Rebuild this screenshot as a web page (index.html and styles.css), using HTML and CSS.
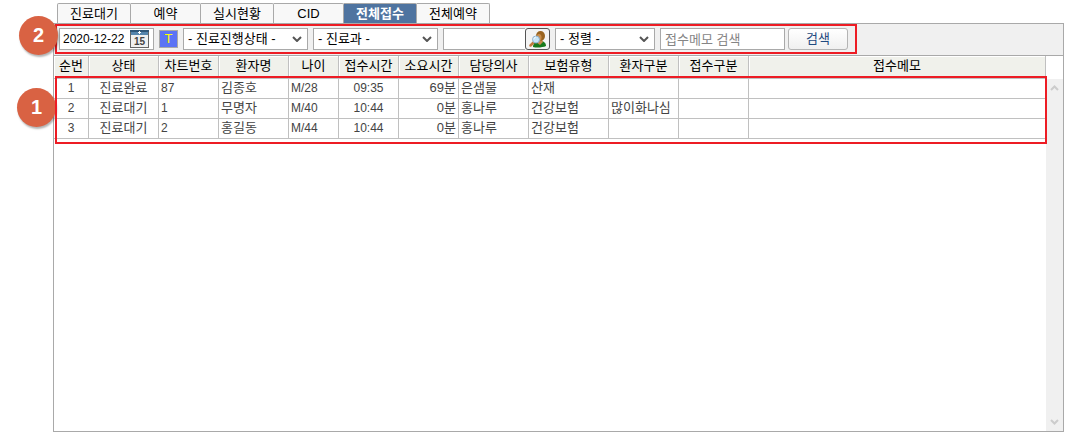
FILE: index.html
```html
<!DOCTYPE html>
<html lang="ko">
<head>
    <meta charset="UTF-8">
    <meta name="viewport" content="width=device-width, initial-scale=1.0">
    <title>전체접수</title>
    <link rel="stylesheet" href="styles.css">
</head>
<body>
    <nav class="tabs">
        <button class="tab">진료대기</button>
        <button class="tab short">예약</button>
        <button class="tab">실시현황</button>
        <button class="tab short">CID</button>
        <button class="tab active">전체접수</button>
        <button class="tab">전체예약</button>
    </nav>

    <main class="panel">
        <span class="badge badge-search">2</span>
        <span class="badge badge-list">1</span>

        <div class="toolbar">
            <form class="filters">
                <div class="field date">
                    <input type="text" value="2020-12-22" aria-label="접수일">
                    <button type="button" class="calendar" aria-label="달력">
                        <svg width="19" height="18" viewBox="0 0 19 18">
                            <rect x="0.5" y="0.5" width="18" height="17" fill="#f0f0f0" stroke="#666"/>
                            <rect x="1" y="1" width="17" height="4" fill="#5585ad"/>
                            <rect x="0" y="0" width="19" height="2" fill="#2f5678"/>
                            <path d="M8 2.5h3M9.5 1v3" stroke="#fff"/>
                            <text x="9.5" y="15" text-anchor="middle" class="day">15</text>
                        </svg>
                    </button>
                </div>
                <button type="button" class="today">T</button>
                <div class="select wide">
                    <select aria-label="진료진행상태"><option>- 진료진행상태 -</option></select>
                    <svg class="arrow" width="10" height="6" viewBox="0 0 10 6"><path d="M1 1l4 4 4-4"/></svg>
                </div>
                <div class="select wide">
                    <select aria-label="진료과"><option>- 진료과 -</option></select>
                    <svg class="arrow" width="10" height="6" viewBox="0 0 10 6"><path d="M1 1l4 4 4-4"/></svg>
                </div>
                <div class="patient">
                    <input type="text" class="field" aria-label="환자">
                    <button type="button" class="find" aria-label="환자 찾기">
                        <svg width="18" height="17" viewBox="0 0 18 17">
                            <path d="M4 16c0-4 3-6 7-6s6 2 6 5c-3 1.500-9 2-13 1z" fill="#187a1d"/>
                            <path d="M8 12l3 2 3-3-1-3H9z" fill="#c98a4b"/>
                            <ellipse cx="11.500" cy="5" rx="4.500" ry="5" fill="#9a6420"/>
                            <ellipse cx="10" cy="6.500" rx="2.500" ry="3.500" fill="#c98d4c"/>
                            <path d="M4.500 11.500l-3 3" stroke="#c27a3e" stroke-width="2.500" stroke-linecap="round"/>
                            <circle cx="7" cy="8.500" r="3.500" fill="#c9e6f8" stroke="#8fb2cf"/>
                            <path d="M5 8c0-1 1-2 2-2" stroke="#fff" fill="none"/>
                        </svg>
                    </button>
                </div>
                <div class="select sort">
                    <select aria-label="정렬"><option>- 정렬 -</option></select>
                    <svg class="arrow" width="10" height="6" viewBox="0 0 10 6"><path d="M1 1l4 4 4-4"/></svg>
                </div>
                <div class="memo-search">
                    <input type="text" class="field memo" placeholder="접수메모 검색" aria-label="접수메모 검색">
                    <button type="submit" class="search">검색</button>
                </div>
            </form>
        </div>

        <div class="content">
            <div class="list">
                <table>
                    <colgroup>
                        <col class="w35"><col class="w70"><col class="w60"><col class="w70">
                        <col class="w50"><col class="w60"><col class="w60"><col class="w70">
                        <col class="w80"><col class="w70"><col class="w70"><col>
                    </colgroup>
                    <thead>
                        <tr>
                            <th>순번</th><th>상태</th><th>차트번호</th><th>환자명</th>
                            <th>나이</th><th>접수시간</th><th>소요시간</th><th>담당의사</th>
                            <th>보험유형</th><th>환자구분</th><th>접수구분</th><th>접수메모</th>
                        </tr>
                    </thead>
                    <tbody>
                        <tr>
                            <td class="center num">1</td><td class="center">진료완료</td><td class="num">87</td><td>김종호</td>
                            <td class="num">M/28</td><td class="center num">09:35</td><td class="right">69분</td><td>은샘물</td>
                            <td>산재</td><td></td><td></td><td></td>
                        </tr>
                        <tr>
                            <td class="center num">2</td><td class="center">진료대기</td><td class="num">1</td><td>무명자</td>
                            <td class="num">M/40</td><td class="center num">10:44</td><td class="right">0분</td><td>홍나루</td>
                            <td>건강보험</td><td>많이화나심</td><td></td><td></td>
                        </tr>
                        <tr>
                            <td class="center num">3</td><td class="center">진료대기</td><td class="num">2</td><td>홍길동</td>
                            <td class="num">M/44</td><td class="center num">10:44</td><td class="right">0분</td><td>홍나루</td>
                            <td>건강보험</td><td></td><td></td><td></td>
                        </tr>
                    </tbody>
                </table>
                <div class="mark"></div>
            </div>
            <div class="scrollbar">
                <svg width="9" height="6" viewBox="0 0 9 6"><path d="M1 5l3.500-3.500L8 5"/></svg>
                <svg width="9" height="6" viewBox="0 0 9 6"><path d="M1 1l3.500 3.500L8 1"/></svg>
            </div>
        </div>
    </main>
</body>
</html>
```

FILE: styles.css
```css
* {
    box-sizing: border-box;
}

body {
    margin: 0;
    padding: 3px 1px 2px 53px;
    min-height: 100vh;
    display: flex;
    flex-direction: column;
    background: #fff;
    color: #000;
}

body, button, input, select {
    font-family: "Liberation Sans", "Noto Sans CJK KR", sans-serif;
    font-size: 13px;
    line-height: 18px;
}

button, input, select {
    margin: 0;
    padding: 0;
    color: inherit;
}

svg {
    display: block;
}

/* Tabs */
.tabs {
    display: flex;
    padding-left: 4px;
}

.tab {
    width: 73px;
    height: 20px;
    border: 1px solid #a9a9a9;
    border-width: 1px 1px 0 0;
    border-radius: 0 2px 0 0;
    background: #f8f8f8;
}

.tab:first-child {
    width: 74px;
    border-left-width: 1px;
    border-radius: 2px 2px 0 0;
}

.tab.short {
    width: 70px;
}

.tab.active {
    background: #4f74a0;
    color: #fff;
    font-weight: bold;
}

/* Panel */
.panel {
    position: relative;
    flex: 1;
    display: flex;
    flex-direction: column;
    border: 1px solid #a9a9a9;
}

.toolbar {
    height: 32px;
    padding-left: 1px;
    background: #f0f0f0;
    border-bottom: 1px solid #a9a9a9;
}

.filters {
    display: flex;
    align-items: center;
    gap: 5px;
    width: max-content;
    height: 30px;
    padding: 0 7px 0 2px;
    border: 2px solid #ed1c24;
}

.field {
    height: 22px;
    background: #fff;
    border: 1px solid #a9a9a9;
    border-radius: 0;
}

.date {
    display: flex;
    align-items: center;
    justify-content: space-between;
    width: 95px;
    padding: 0 4px 0 3px;
}

.date input {
    width: 66px;
    border: none;
    font-size: 12px;
}

.calendar {
    border: none;
    background: none;
}

.day {
    font-size: 10px;
    font-weight: bold;
    fill: #444;
}

.today {
    width: 19px;
    height: 18px;
    border: 1px solid #a9a9a9;
    background: #5b73f5;
    color: #ff0;
    line-height: 16px;
}

.select {
    position: relative;
}

.select select {
    display: block;
    width: 100%;
    height: 22px;
    padding: 0 20px 0 4px;
    appearance: none;
    background: #fff;
    border: 1px solid #a9a9a9;
    border-radius: 0;
}

.wide {
    width: 125px;
}

.sort {
    width: 100px;
}

.arrow {
    position: absolute;
    right: 6px;
    top: 8px;
    fill: none;
    stroke: #555;
    stroke-width: 2;
    pointer-events: none;
}

.patient {
    display: flex;
}

.patient .field {
    width: 82px;
    border-right: none;
}

.find {
    display: flex;
    align-items: center;
    justify-content: center;
    width: 25px;
    height: 22px;
    border: 1px solid #555;
    border-radius: 3px;
    background: #f4f4f4;
}

.memo-search {
    display: flex;
    gap: 3px;
}

.memo {
    width: 125px;
    padding: 0 4px;
}

.memo::placeholder {
    color: #858585;
}

.search {
    width: 60px;
    height: 22px;
    border: 1px solid #b4b4b4;
    border-radius: 3px;
    background: linear-gradient(#fff, #f0f0f0);
    color: #1f4a80;
}

/* Reception list */
.content {
    flex: 1;
    display: flex;
    align-items: stretch;
}

.list {
    position: relative;
    flex: 1;
    align-self: flex-start;
}

table {
    width: 100%;
    table-layout: fixed;
    border-collapse: separate;
    border-spacing: 0;
}

.w35 { width: 35px; }
.w50 { width: 50px; }
.w60 { width: 60px; }
.w70 { width: 70px; }
.w80 { width: 80px; }

th, td {
    padding: 0 2px 2px;
    border-right: 1px solid #c0c0c0;
    border-bottom: 1px solid #c0c0c0;
    white-space: nowrap;
    line-height: 16px;
}

th {
    height: 23px;
    background: #f0f1eb;
    box-shadow: inset 1px 1px #fff;
    font-weight: normal;
}

td {
    height: 20px;
    color: #444;
    text-align: left;
}

.center {
    text-align: center;
}

.right {
    text-align: right;
}

.num {
    font-size: 12px;
}

.scrollbar {
    display: flex;
    flex-direction: column;
    justify-content: space-between;
    align-items: center;
    width: 17px;
    margin-top: 23px;
    padding: 6px 0;
    background: #f0f0f0;
    fill: none;
    stroke: #ccc;
    stroke-width: 2;
}

/* Numbered marks */
.mark {
    position: absolute;
    top: 20px;
    left: 1px;
    right: -1px;
    bottom: -5px;
    border: 2px solid #ed1c24;
    pointer-events: none;
}

.badge {
    position: absolute;
    width: 39px;
    height: 39px;
    border-radius: 50%;
    background: #d96243;
    box-shadow: 1px 2px 2px rgba(0, 0, 0, 0.3);
    color: #fff;
    font-size: 20px;
    font-weight: bold;
    line-height: 39px;
    text-align: center;
}

.badge-search {
    left: -35px;
    top: -8px;
}

.badge-list {
    left: -37px;
    top: 64px;
}
```
